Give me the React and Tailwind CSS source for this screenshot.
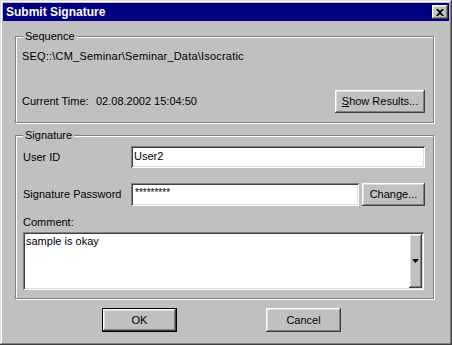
import React from 'react';

const raised =
  'shadow-[inset_-1px_-1px_#404040,inset_1px_1px_#ffffff,inset_-2px_-2px_#808080,inset_2px_2px_#dfdfdf]';
const sunken =
  'shadow-[inset_1px_1px_#808080,inset_-1px_-1px_#ffffff,inset_2px_2px_#404040,inset_-2px_-2px_#dfdfdf]';
const etched = 'border border-[#808080] shadow-[inset_1px_1px_#ffffff,1px_1px_#ffffff]';

const GroupBox = ({ title, className, children }) => (
  <div className={`relative ${etched} ${className}`}>
    <span className="absolute -top-[7px] left-[7px] px-[2px] bg-[#c0c0c0] leading-[13px]">{title}</span>
    {children}
  </div>
);

const App = () => {
  return (
    <div
      className="w-[452px] h-[345px] bg-[#c0c0c0] p-[3px] flex flex-col text-[11px] leading-[13px] text-black shadow-[inset_-1px_-1px_#404040,inset_1px_1px_#dfdfdf,inset_-2px_-2px_#808080,inset_2px_2px_#ffffff]"
      style={{ fontFamily: '"Liberation Sans", Arial, sans-serif' }}
    >
      {/* Title bar */}
      <div className="h-[18px] bg-[#000080] flex items-center justify-between pl-[3px] pr-[1px]">
        <span className="text-white font-bold text-[12px] leading-[14px]">Submit Signature</span>
        <div className={`w-[16px] h-[14px] bg-[#c0c0c0] flex items-center justify-center ${raised}`}>
          <svg width="8" height="7" viewBox="0 0 8 7">
            <path d="M0 0h2l2 2 2-2h2L5 3.5 8 7H6L4 5 2 7H0l3-3.5z" fill="#000" />
          </svg>
        </div>
      </div>

      {/* Sequence */}
      <GroupBox title="Sequence" className="mt-[15px] ml-[12px] w-[419px] h-[87px] pt-[13px] pl-[6px] pr-[8px]">
        <div className="tracking-[0.2px]">SEQ::\CM_Seminar\Seminar_Data\Isocratic</div>
        <div className="mt-[27px] flex items-center justify-between">
          <div className="flex">
            <span className="w-[74px]">Current Time:</span>
            <span>02.08.2002 15:04:50</span>
          </div>
          <button className={`w-[90px] h-[23px] bg-[#c0c0c0] ${raised}`}>
            <span className="underline">S</span>how Results...
          </button>
        </div>
      </GroupBox>

      {/* Signature */}
      <GroupBox title="Signature" className="mt-[12px] ml-[12px] w-[419px] h-[164px] pt-[10px] pl-[7px]">
        <div className="flex items-center">
          <span className="w-[108px]">User ID</span>
          <div className={`w-[294px] h-[22px] bg-white pl-[3px] pt-[4px] ${sunken}`}>User2</div>
        </div>
        <div className="mt-[15px] flex items-center">
          <span className="w-[108px]">Signature Password</span>
          <div className={`w-[228px] h-[23px] bg-white pl-[4px] pt-[3px] text-[10px] ${sunken}`}>
            *********
          </div>
          <button className={`ml-[3px] w-[63px] h-[23px] bg-[#c0c0c0] ${raised}`}>Change...</button>
        </div>
        <div className="mt-[10px]">Comment:</div>
        <div className={`mt-[3px] w-[401px] h-[58px] bg-white flex p-[2px] ${sunken}`}>
          <div className="flex-1 pl-[1px] pt-[1px]">sample is okay</div>
          <div className={`w-[13px] bg-[#c0c0c0] flex items-center justify-center ${raised}`}>
            <svg width="7" height="4" viewBox="0 0 7 4">
              <path d="M0 0h7L3.5 4z" fill="#000" />
            </svg>
          </div>
        </div>
      </GroupBox>

      {/* Buttons */}
      <div className="mt-[9px] flex pl-[99px] gap-[89px]">
        <button className="w-[75px] h-[24px] border border-black bg-[#c0c0c0]">
          <div className={`w-full h-full flex items-center justify-center ${raised}`}>OK</div>
        </button>
        <button className={`w-[75px] h-[24px] bg-[#c0c0c0] ${raised}`}>Cancel</button>
      </div>
    </div>
  );
};

export default App;
